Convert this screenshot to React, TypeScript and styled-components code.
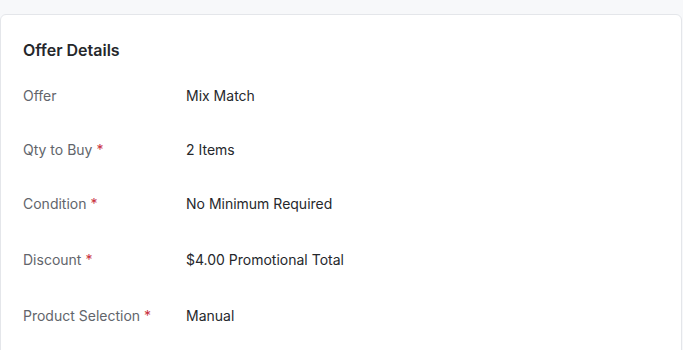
import * as React from 'react';
import styled, { createGlobalStyle } from 'styled-components';

const GlobalStyle = createGlobalStyle`
  html, body {
    margin: 0;
    padding: 0;
    background: #f7f8fa;
    font-family: Inter, "Noto Sans", sans-serif;
    -webkit-font-smoothing: antialiased;
  }
`;

const Page = styled.div`
  padding: 14px 1px 0 0;
  height: 336px;
  overflow: hidden;
`;

const Card = styled.section`
  background: #ffffff;
  border: 1px solid #e4e6ea;
  border-radius: 6px;
  padding: 25px 22px 40px;
  min-height: 400px;
`;

const Title = styled.h2`
  margin: 0 0 9px;
  font-size: 16px;
  line-height: 20px;
  font-weight: 600;
  color: #25272b;
`;

const Fields = styled.dl`
  margin: 0;
  display: grid;
  grid-template-columns: 163px 1fr;
  grid-template-rows: 54px 54px 54px 57px 55px;
  align-items: center;
`;

const Label = styled.dt`
  font-size: 14px;
  line-height: 20px;
  color: #62656b;
`;

const Required = styled.span`
  color: #c8313d;
  margin-left: 4px;
`;

const Value = styled.dd`
  margin: 0;
  font-size: 14px;
  line-height: 20px;
  color: #26282c;
`;

const rows = [
  { label: 'Offer', value: 'Mix Match', required: false },
  { label: 'Qty to Buy', value: '2 Items', required: true },
  { label: 'Condition', value: 'No Minimum Required', required: true },
  { label: 'Discount', value: '$4.00 Promotional Total', required: true },
  { label: 'Product Selection', value: 'Manual', required: true },
];

export default function App() {
  return (
    <Page>
      <GlobalStyle />
      <Card>
        <Title>Offer Details</Title>
        <Fields>
          {rows.map((r) => (
            <React.Fragment key={r.label}>
              <Label>
                {r.label}
                {r.required && <Required>*</Required>}
              </Label>
              <Value>{r.value}</Value>
            </React.Fragment>
          ))}
        </Fields>
      </Card>
    </Page>
  );
}
